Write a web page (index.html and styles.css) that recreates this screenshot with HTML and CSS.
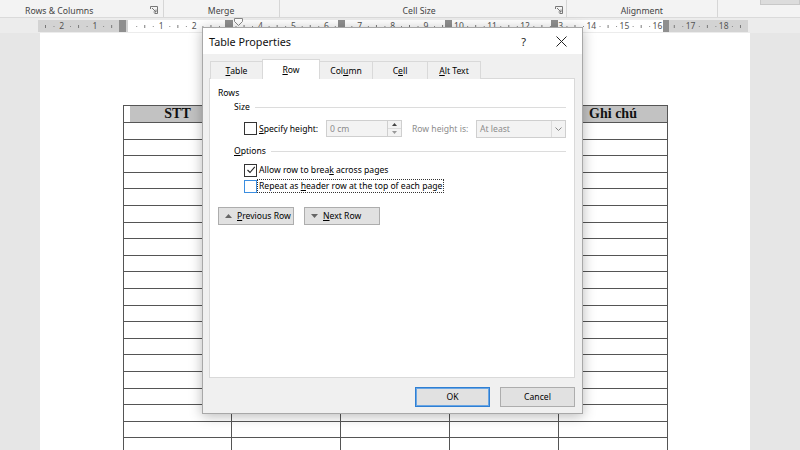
FILE: index.html
```html
<!DOCTYPE html>
<html>
<head>
<meta charset="utf-8">
<link rel="stylesheet" href="styles.css">
</head>
<body>
<div class="ribbon">
  <div class="grp g1"><span class="glabel">Rows &amp; Columns</span><svg class="launch" width="8" height="8" viewBox="0 0 8 8"><path d="M0.5 3V0.5H7.5V7.5H4.5" fill="none" stroke="#777"/><path d="M2 2L6 6M6 3.5V6H3.5" fill="none" stroke="#777"/></svg></div>
  <div class="grp g2"><span class="glabel">Merge</span></div>
  <div class="grp g3"><span class="glabel">Cell Size</span><svg class="launch" width="8" height="8" viewBox="0 0 8 8"><path d="M0.5 3V0.5H7.5V7.5H4.5" fill="none" stroke="#777"/><path d="M2 2L6 6M6 3.5V6H3.5" fill="none" stroke="#777"/></svg></div>
  <div class="grp g4"><span class="glabel">Alignment</span></div>
  <div class="grp g5"><span class="stub"></span></div>
</div>
<div class="ruler-row">
  <div class="ruler">
    <div class="nums">
      <span>2</span><span>1</span><span></span><span>1</span><span>2</span><span>3</span><span>4</span><span>5</span><span>6</span><span>7</span><span>8</span><span>9</span><span>10</span><span>11</span><span>12</span><span>13</span><span>14</span><span>15</span><span>16</span><span>17</span><span>18</span>
    </div>
    <span class="mk mk-l"></span>
    <span class="mk mk-1"></span>
    <span class="mk mk-2"></span>
    <span class="mk mk-3"></span>
    <span class="mk mk-4"></span>
    <span class="mk mk-r"></span>
    <svg class="indent" width="9" height="8" viewBox="0 0 9 8"><path d="M0.5 0.5H8.5V3.5L4.5 7.5L0.5 3.5Z" fill="#fff" stroke="#888"/></svg>
  </div>
</div>
<div class="workspace">
  <div class="page">
    <table class="doc">
      <colgroup><col class="c1"><col class="c2"><col class="c3"><col class="c4"><col class="c5"></colgroup>
      <tr class="hdr"><td class="stt">STT</td><td>Họ và tên</td><td>Ngày sinh</td><td>Lớp</td><td>Ghi chú</td></tr>
      <tr><td></td><td></td><td></td><td></td><td></td></tr>
      <tr><td></td><td></td><td></td><td></td><td></td></tr>
      <tr><td></td><td></td><td></td><td></td><td></td></tr>
      <tr><td></td><td></td><td></td><td></td><td></td></tr>
      <tr><td></td><td></td><td></td><td></td><td></td></tr>
      <tr><td></td><td></td><td></td><td></td><td></td></tr>
      <tr><td></td><td></td><td></td><td></td><td></td></tr>
      <tr><td></td><td></td><td></td><td></td><td></td></tr>
      <tr><td></td><td></td><td></td><td></td><td></td></tr>
      <tr><td></td><td></td><td></td><td></td><td></td></tr>
      <tr><td></td><td></td><td></td><td></td><td></td></tr>
      <tr><td></td><td></td><td></td><td></td><td></td></tr>
      <tr><td></td><td></td><td></td><td></td><td></td></tr>
      <tr><td></td><td></td><td></td><td></td><td></td></tr>
      <tr><td></td><td></td><td></td><td></td><td></td></tr>
      <tr><td></td><td></td><td></td><td></td><td></td></tr>
      <tr><td></td><td></td><td></td><td></td><td></td></tr>
      <tr><td></td><td></td><td></td><td></td><td></td></tr>
      <tr><td></td><td></td><td></td><td></td><td></td></tr>
      <tr><td></td><td></td><td></td><td></td><td></td></tr>
    </table>
  </div>
</div>

<div class="dialog">
  <div class="titlebar">
    <span class="title">Table Properties</span>
    <span class="help">?</span>
    <svg class="close" width="11" height="11" viewBox="0 0 11 11"><path d="M0.5 0.5L10.5 10.5M10.5 0.5L0.5 10.5" stroke="#222" stroke-width="1"/></svg>
  </div>
  <div class="dbody">
    <div class="tabs">
      <span class="tab t-table"><u>T</u>able</span>
      <span class="tab t-row sel"><u>R</u>ow</span>
      <span class="tab t-col">Col<u>u</u>mn</span>
      <span class="tab t-cell">C<u>e</u>ll</span>
      <span class="tab t-alt"><u>A</u>lt Text</span>
    </div>
    <div class="panel">
      <div class="sect-title">Rows</div>
      <div class="ghead"><span>Size</span><span class="rule"></span></div>
      <div class="size-row">
        <span class="cb"></span>
        <span class="lbl-h"><u>S</u>pecify height:</span>
        <span class="input">0 cm</span>
        <span class="spin"><span class="sp-up"><svg width="5" height="3" viewBox="0 0 5 3"><path d="M0 3L2.5 0L5 3Z" fill="#444"/></svg></span><span class="sp-dn"><svg width="5" height="3" viewBox="0 0 5 3"><path d="M0 0L2.5 3L5 0Z" fill="#999"/></svg></span></span>
        <span class="lbl-rh">Row height is:</span>
        <span class="select"><span class="sel-text">At least</span><span class="sel-arrow"><svg width="7" height="4" viewBox="0 0 7 4"><path d="M0.5 0.5L3.5 3.5L6.5 0.5" fill="none" stroke="#888"/></svg></span></span>
      </div>
      <div class="ghead gopt"><span><u>O</u>ptions</span><span class="rule"></span></div>
      <div class="crow r1"><span class="cb"><svg width="10" height="10" viewBox="0 0 10 10"><path d="M1.5 5L4 7.5L8.8 1.8" fill="none" stroke="#222" stroke-width="1.1"/></svg></span><span class="clbl">Allow row to brea<u>k</u> across pages</span></div>
      <div class="crow r2"><span class="cb blue"></span><span class="clbl focus">Repeat as <u>h</u>eader row at the top of each page</span></div>
      <div class="navs">
        <span class="btn nav"><svg width="7" height="4" viewBox="0 0 7 4"><path d="M0 4L3.5 0L7 4Z" fill="#666"/></svg><span class="btxt"><u>P</u>revious Row</span></span>
        <span class="btn nav"><svg width="7" height="4" viewBox="0 0 7 4"><path d="M0 0L3.5 4L7 0Z" fill="#666"/></svg><span class="btxt"><u>N</u>ext Row</span></span>
      </div>
    </div>
    <div class="footer">
      <span class="btn ok">OK</span>
      <span class="btn cancel">Cancel</span>
    </div>
  </div>
</div>
</body>
</html>
```
FILE: styles.css
```css
* { box-sizing: border-box; }
html, body { margin: 0; padding: 0; }
body {
  width: 800px; height: 450px; overflow: hidden;
  background: #e6e6e6;
  font-family: "Segoe UI", "Noto Sans", "Open Sans", sans-serif;
  position: relative;
}
.ribbon {
  height: 18px; background: #f3f3f3; border-bottom: 1px solid #dadada;
  display: flex; font-size: 8.7px; color: #444;
}
.grp { height: 17px; display: flex; align-items: center; border-right: 1px solid #d6d6d6; position: relative; }
.g1 { width: 166px; padding-left: 25px; }
.g1 .launch { margin-left: auto; margin-right: 5px; margin-top: 2px; }
.g2 { width: 118px; justify-content: center; }
.g3 { width: 290px; padding-left: 123px; }
.g3 .launch { margin-left: auto; margin-right: 3px; margin-top: 2px; }
.g4 { width: 154px; justify-content: center; }
.g5 { flex: 1; border-right: none; align-items: flex-start; }
.stub { margin-left: 42px; width: 40px; height: 5px; background: #dcdcdc; border: 1px solid #c8c8c8; border-top: none; }
.glabel { padding-top: 4px; }

.ruler-row { height: 15px; padding-top: 2px; background: #ececec; }
.ruler {
  margin-left: 38px; width: 710px; height: 12px; position: relative;
  background-image:
    linear-gradient(90deg, #8a8a8a 1px, transparent 1px),
    linear-gradient(90deg, #777 1px, transparent 1px),
    linear-gradient(90deg, #d3d3d3 0 90px, #fff 90px 625px, #d3d3d3 625px);
  background-size: 16.55px 1px, 33.1px 3px, 100% 100%;
  background-position: 15.5px 6px, 7px 5px, 0 0;
  background-repeat: repeat-x, repeat-x, no-repeat;
}
.nums { display: flex; padding-left: 7.25px; font-size: 8.5px; color: #555; line-height: 12px; }
.nums span { width: 33.1px; flex: none; text-align: center; }
.mk { position: absolute; top: 0; height: 12px; width: 7px; background: #8f8f8f; }
.mk-l { left: 81px; }
.mk-1 { left: 187px; width: 8px; }
.mk-2 { left: 300px; }
.mk-3 { left: 407px; }
.mk-4 { left: 513px; }
.mk-r { left: 625px; width: 6px; }
.indent { position: absolute; left: 196px; top: -2px; }

.workspace { padding-left: 40px; height: 417px; }
.page { width: 710px; height: 417px; background: #fff; padding-top: 72px; padding-left: 83px; }
.doc { border-collapse: collapse; table-layout: fixed; width: 544px; font-family: "Liberation Serif", "Times New Roman", serif; }
.c1 { width: 108px; } .c2 { width: 109px; } .c3 { width: 109px; } .c4 { width: 109px; } .c5 { width: 109px; }
.doc td { border: 1px solid #555; height: 16.6px; padding: 0; }
.doc .hdr td { height: 17px; background: #c2c2c2; font-weight: bold; font-size: 14px; text-align: center; line-height: 14px; color: #111; }
.doc .hdr td.stt { box-shadow: inset 6px 0 0 #fff; }

.dialog {
  position: absolute; left: 202px; top: 27px; width: 381px; height: 387px;
  background: #f0f0f0; border: 1px solid #a8a8a8;
  box-shadow: 0 2px 12px rgba(0,0,0,0.28);
  font-size: 8.6px; color: #000;
}
.titlebar { height: 26px; background: #fff; display: flex; align-items: center; padding-left: 6px; }
.title { font-size: 10.8px; color: #111; }
.help { margin-left: auto; font-size: 11px; color: #222; margin-right: 30px; }
.close { margin-right: 15px; }
.dbody { padding: 5px 7px 0 6px; }
.tabs { display: flex; height: 20px; margin-left: 1px; margin-bottom: -1px; position: relative; z-index: 1; }
.tab { height: 18px; margin-top: 2px; border: 1px solid #d9d9d9; border-bottom: none; background: #f0f0f0; display: flex; align-items: center; justify-content: center; margin-right: -1px; }
.tab.sel { height: 20px; margin-top: 0; background: #fff; }
.t-table { width: 53px; } .t-row { width: 58px; } .t-col { width: 54px; } .t-cell { width: 56px; } .t-alt { width: 54px; }
u { text-decoration: underline; text-underline-offset: 1px; }
.panel { height: 300px; background: #fff; border: 1px solid #d9d9d9; padding: 8px 8px 0 8px; }
.sect-title { height: 12px; line-height: 12px; }
.ghead { height: 14px; margin-top: 1px; margin-left: 16px; display: flex; align-items: center; }
.ghead .rule { flex: 1; height: 1px; background: #dcdcdc; margin-left: 5px; }
.size-row { height: 17px; margin-top: 6px; margin-left: 26px; display: flex; align-items: center; }
.cb { width: 13px; height: 13px; border: 1px solid #333; background: #fff; flex: none; display: flex; align-items: center; justify-content: center; }
.cb.blue { border-color: #3b8ee0; }
.lbl-h { width: 69px; padding-left: 2px; }
.input { width: 62px; height: 17px; border: 1px solid #cfcfcf; background: #f3f3f3; color: #8c8c8c; padding-left: 3px; display: flex; align-items: center; }
.spin { width: 14px; height: 17px; border: 1px solid #cfcfcf; border-left: none; background: #f3f3f3; display: flex; flex-direction: column; }
.spin span { flex: 1; display: flex; align-items: center; justify-content: center; }
.sp-up { border-bottom: 1px solid #dcdcdc; }
.lbl-rh { width: 74px; padding-left: 10px; color: #8c8c8c; }
.select { width: 90px; height: 18px; border: 1px solid #cfcfcf; background: #f3f3f3; color: #8c8c8c; display: flex; align-items: center; }
.sel-text { flex: 1; padding-left: 3px; }
.sel-arrow { width: 14px; height: 16px; border-left: 1px solid #dcdcdc; display: flex; align-items: center; justify-content: center; }
.gopt { margin-top: 7px; }
.crow { height: 14px; margin-left: 26px; display: flex; align-items: center; }
.r1 { margin-top: 5px; }
.r2 { margin-top: 2px; }
.clbl { padding-left: 2px; white-space: nowrap; }
.clbl.focus { display: inline-block; border: 1px dotted #333; padding: 0 1px; height: 14px; line-height: 12px; }
.navs { display: flex; gap: 10px; margin-top: 14px; }
.btn { background: #e1e1e1; border: 1px solid #adadad; display: flex; align-items: center; justify-content: center; white-space: nowrap; }
.btxt { white-space: nowrap; }
.nav { width: 76px; height: 18px; gap: 5px; justify-content: flex-start; padding-left: 6px; flex: none; }
.footer { display: flex; justify-content: flex-end; gap: 10px; margin-top: 9px; }
.footer .btn { width: 75px; height: 20px; }
.ok { border: 1px solid #2f7fd3; box-shadow: inset 0 0 0 1px #6aa6e4; }
```
